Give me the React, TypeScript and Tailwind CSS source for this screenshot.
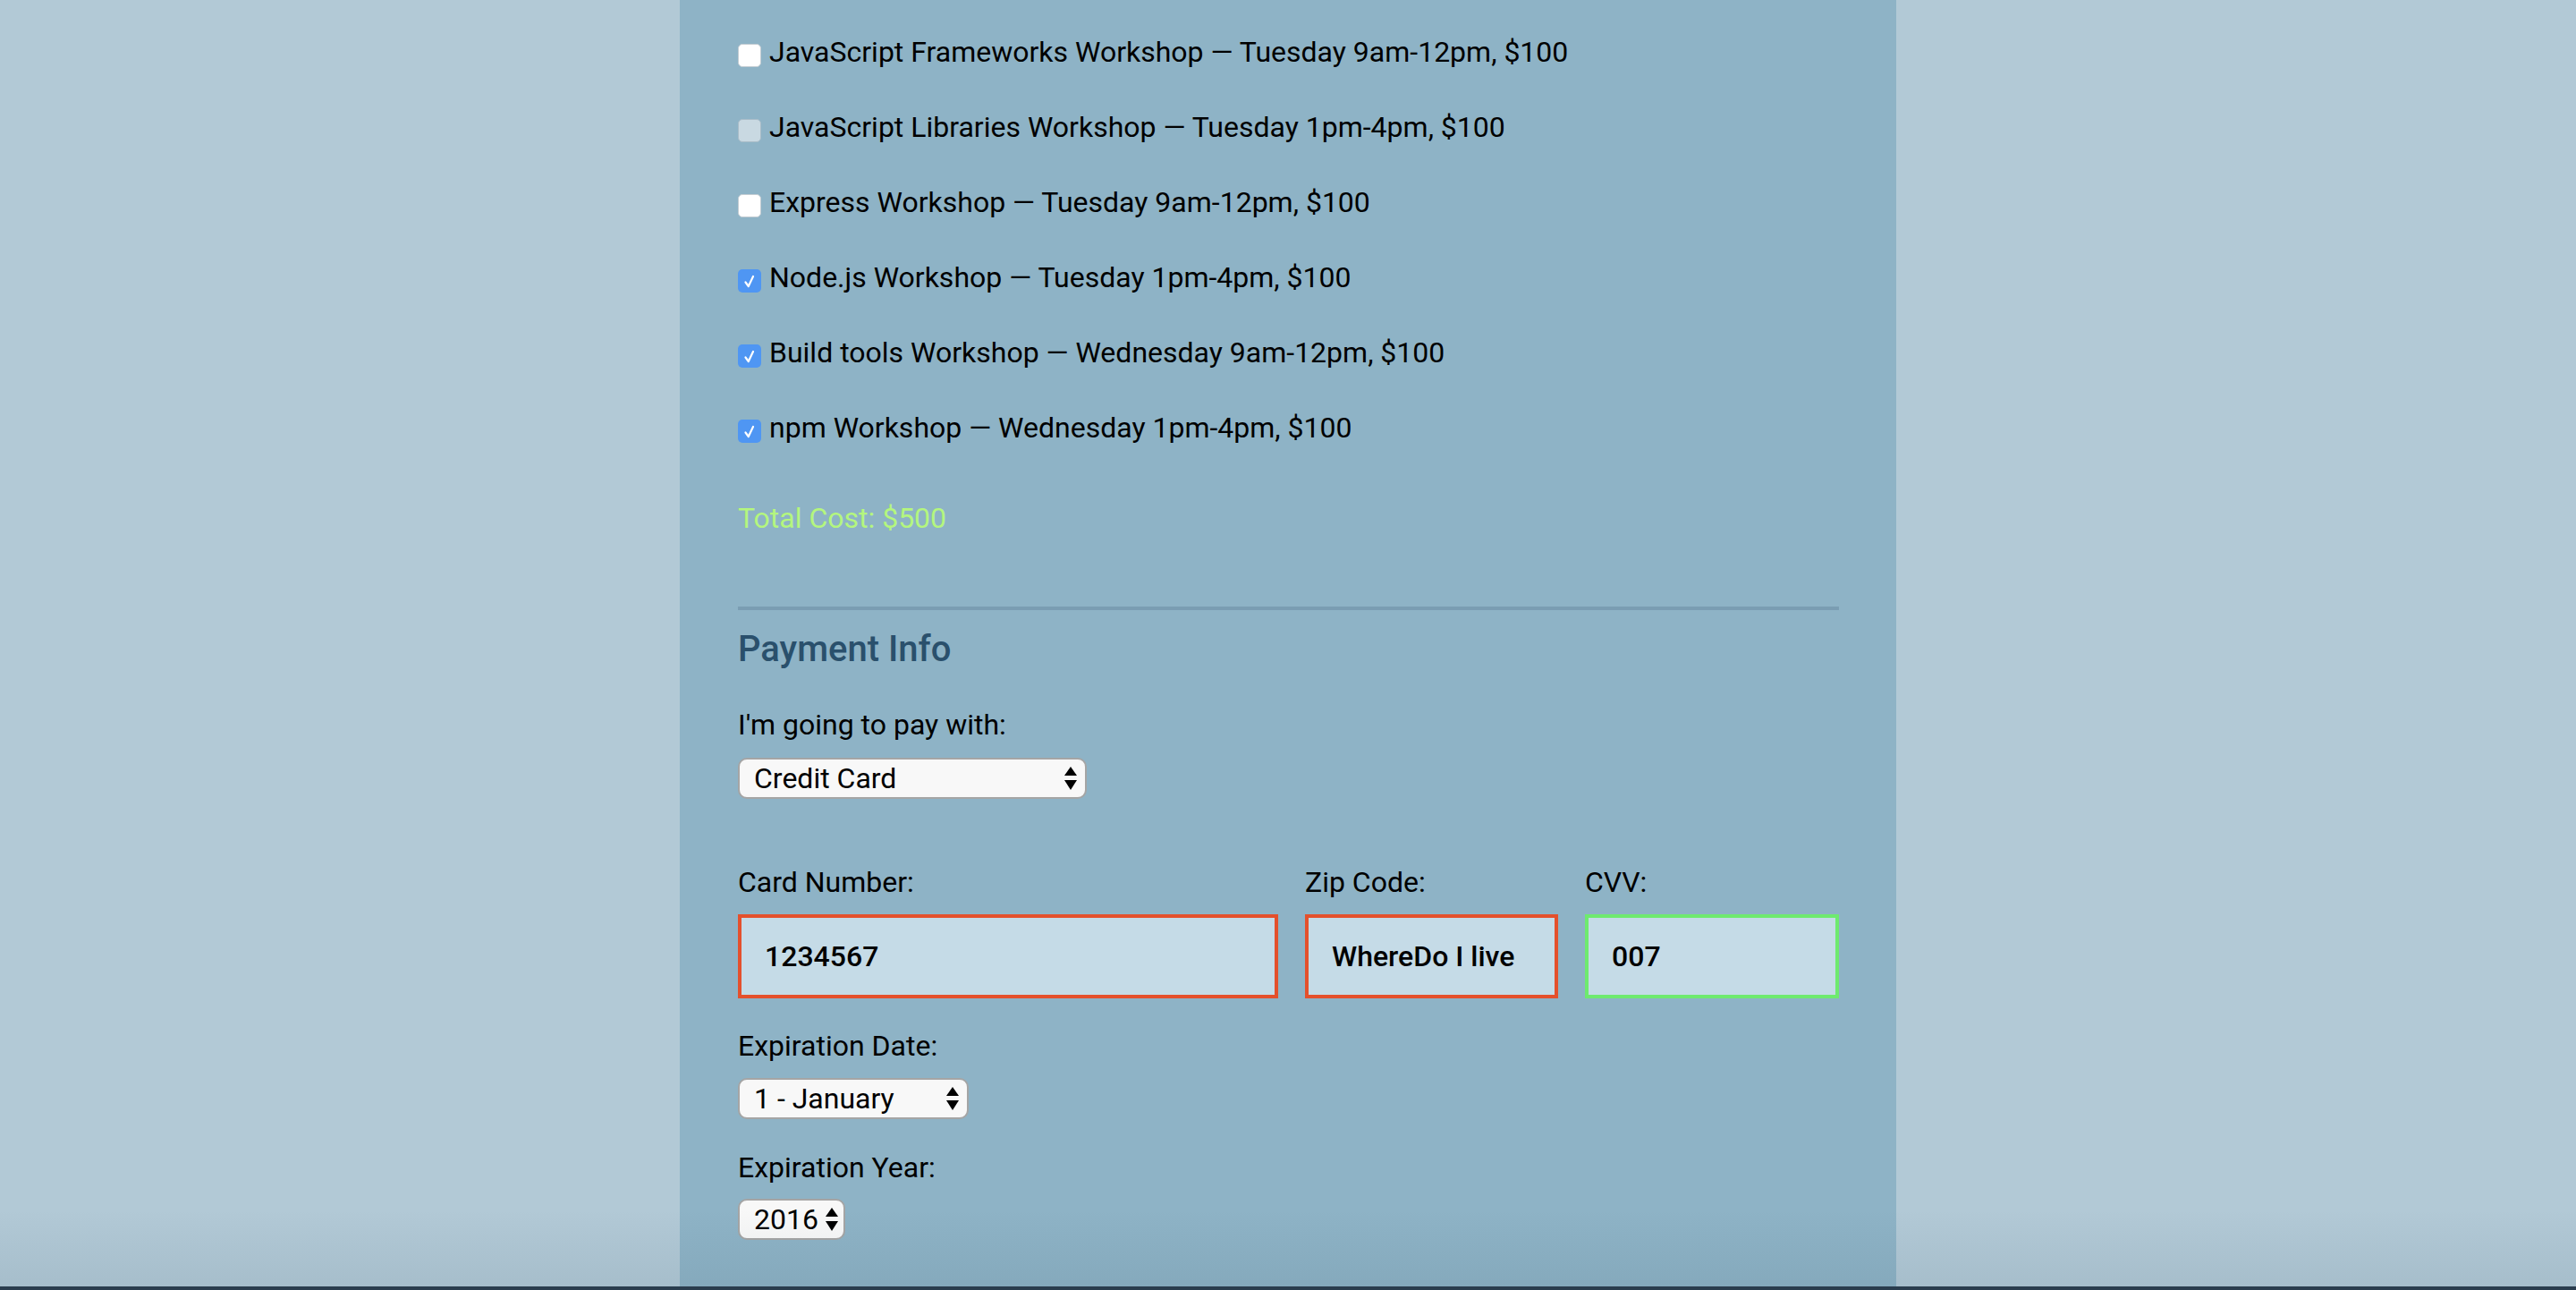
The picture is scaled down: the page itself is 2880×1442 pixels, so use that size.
import React from "react";

const workshops = [
  { label: "JavaScript Frameworks Workshop — Tuesday 9am-12pm, $100", state: "off" },
  { label: "JavaScript Libraries Workshop — Tuesday 1pm-4pm, $100", state: "disabled" },
  { label: "Express Workshop — Tuesday 9am-12pm, $100", state: "off" },
  { label: "Node.js Workshop — Tuesday 1pm-4pm, $100", state: "on" },
  { label: "Build tools Workshop — Wednesday 9am-12pm, $100", state: "on" },
  { label: "npm Workshop — Wednesday 1pm-4pm, $100", state: "on" },
];

function Checkbox({ state }: { state: string }) {
  if (state === "on") {
    return (
      <span className="mt-[11px] flex h-[26px] w-[26px] shrink-0 items-center justify-center rounded-[5px] bg-[#4f96f3]">
        <svg width="16" height="18" viewBox="0 0 16 18">
          <path d="M3.5 10.5 L6.8 15 L12 4" fill="none" stroke="white" strokeWidth="2.2" strokeLinecap="round" strokeLinejoin="round" />
        </svg>
      </span>
    );
  }
  if (state === "disabled") {
    return <span className="mt-[11px] h-[26px] w-[26px] shrink-0 rounded-[5px] border border-[#a9bcc8] bg-[#c9d9e2]" />;
  }
  return <span className="mt-[11px] h-[26px] w-[26px] shrink-0 rounded-[5px] border border-[#c4cdd3] bg-white" />;
}

function Arrows() {
  return (
    <svg width="14" height="27" viewBox="0 0 14 27" className="shrink-0">
      <polygon points="7,0 14,10 0,10" fill="black" />
      <polygon points="0,15 14,15 7,26" fill="black" />
    </svg>
  );
}

function Select({ value, width, padR }: { value: string; width: string; padR: string }) {
  return (
    <div
      className={`flex h-[46px] items-center justify-between rounded-[10px] border-2 border-[#a5a5a5] bg-[#f8f8f8] pl-[16px] text-[32px] leading-[40px] text-black ${width} ${padR}`}
    >
      <span>{value}</span>
      <Arrows />
    </div>
  );
}

function Field({ value, border }: { value: string; border: string }) {
  return (
    <div className={`flex h-[94px] items-center border-4 bg-[#c5dbe7] pl-[26px] text-[32px] font-medium text-black ${border}`}>
      {value}
    </div>
  );
}

export default function App() {
  return (
    <div className="relative h-[1442px] overflow-hidden bg-[#b2c9d6] font-['Roboto',sans-serif] text-black">
      <div className="mx-auto flex h-full w-[1360px] flex-col bg-[#8eb3c6] pl-[65px] pr-[64px] pt-[38px]">
        <div className="flex flex-col gap-[44px]">
          {workshops.map((w) => (
            <div key={w.label} className="flex h-[40px] items-start gap-[9px]">
              <Checkbox state={w.state} />
              <span className="text-[32px] leading-[40px]">{w.label}</span>
            </div>
          ))}
        </div>

        <div className="mt-[61px] text-[32px] leading-[40px] text-[#b4f67e]">Total Cost: $500</div>

        <div className="mt-[79px] h-[4px] w-full bg-[#7a9db2]" />

        <h2 className="mt-[20px] text-[40px] font-medium leading-[48px] text-[#2a506c]">Payment Info</h2>

        <div className="mt-[40px] text-[32px] leading-[40px]">I'm going to pay with:</div>
        <div className="mt-[17px]">
          <Select value="Credit Card" width="w-[390px]" padR="pr-[9px]" />
        </div>

        <div className="mt-[73px] grid grid-cols-[604px_283px_284px] justify-between gap-y-[16px]">
          <div className="text-[32px] leading-[40px]">Card Number:</div>
          <div className="text-[32px] leading-[40px]">Zip Code:</div>
          <div className="text-[32px] leading-[40px]">CVV:</div>
          <Field value="1234567" border="border-[#e4502c]" />
          <Field value="WhereDo I live" border="border-[#e4502c]" />
          <Field value="007" border="border-[#6eea6f]" />
        </div>

        <div className="mt-[33px] text-[32px] leading-[40px]">Expiration Date:</div>
        <div className="mt-[16px]">
          <Select value="1 - January" width="w-[258px]" padR="pr-[9px]" />
        </div>

        <div className="mt-[34px] text-[32px] leading-[40px]">Expiration Year:</div>
        <div className="mt-[15px]">
          <Select value="2016" width="w-[120px]" padR="pr-[6px]" />
        </div>
      </div>

      <div className="pointer-events-none absolute inset-x-0 bottom-0 h-[90px] bg-gradient-to-b from-transparent to-[rgba(20,50,70,0.08)]" />
      <div className="pointer-events-none absolute inset-x-0 bottom-0 h-[4px] bg-[#2a3d4e]" />
    </div>
  );
}
